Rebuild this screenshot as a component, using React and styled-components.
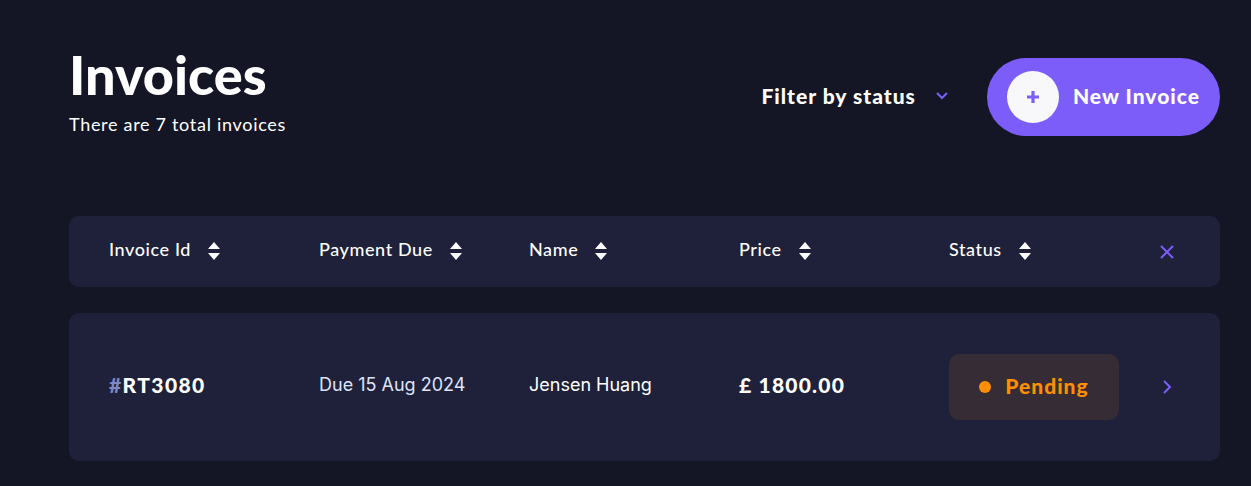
import styled, { createGlobalStyle } from 'styled-components';

const GlobalStyle = createGlobalStyle`
  body {
    margin: 0;
    background: #141625;
    font-family: "Lato", "Noto Sans", sans-serif;
    color: #ffffff;
  }
`;

const Page = styled.main`
  padding: 42px 31px 24px 69px;
`;

const TopBar = styled.header`
  display: flex;
  justify-content: space-between;
  align-items: center;
`;

const TitleBlock = styled.div`
  display: flex;
  flex-direction: column;
`;

const Title = styled.h1`
  margin: 0;
  font-size: 54px;
  line-height: 64px;
  font-weight: 900;
  letter-spacing: 0;
`;

const Subtitle = styled.p`
  margin: 6px 0 0;
  font-size: 18px;
  line-height: 22px;
  letter-spacing: 0.7px;
  color: #ffffff;
`;

const Actions = styled.div`
  display: flex;
  align-items: center;
  gap: 39px;
  margin-top: 16px;
`;

const Filter = styled.button`
  display: flex;
  align-items: center;
  gap: 20px;
  background: none;
  border: none;
  padding: 0 0 4px;
  color: #ffffff;
  font-family: inherit;
  font-size: 21px;
  font-weight: 900;
  letter-spacing: 1px;
  cursor: pointer;

  svg {
    margin-top: 2px;
  }
`;

const NewButton = styled.button`
  display: flex;
  align-items: center;
  gap: 14px;
  height: 78px;
  padding: 0 20px;
  border: none;
  border-radius: 39px;
  background: #7c5dfa;
  color: #ffffff;
  font-family: inherit;
  font-size: 21px;
  font-weight: 900;
  letter-spacing: 1px;
  cursor: pointer;
`;

const ButtonLabel = styled.span`
  padding-bottom: 3px;
`;

const PlusCircle = styled.span`
  display: flex;
  align-items: center;
  justify-content: center;
  width: 52px;
  height: 52px;
  border-radius: 50%;
  background: #f8f8fb;
`;

const Card = styled.div`
  display: grid;
  grid-template-columns: repeat(5, 210px) 1fr;
  align-items: center;
  padding: 0 46px 0 40px;
  height: ${(p) => p.$height}px;
  margin-top: ${(p) => p.$top}px;
  background: #1e2139;
  border-radius: 10px;
`;

const HeadCell = styled.div`
  display: flex;
  align-items: center;
  gap: 17px;
  padding-bottom: 5px;
  font-size: 18px;
  font-weight: 500;
  letter-spacing: 0.6px;
  color: #ffffff;

  svg {
    margin-top: 4px;
  }
`;

const EndCell = styled.div`
  display: flex;
  justify-content: flex-end;
  padding-right: ${(p) => p.$inset || 0}px;
`;

const TextCell = styled.div`
  padding-bottom: 5px;
`;

const IdCell = styled(TextCell)`
  font-size: 21px;
  font-weight: 900;
  letter-spacing: 1.4px;
  span {
    color: #7e88c3;
  }
`;

const DueCell = styled(TextCell)`
  font-family: "Inter", "Noto Sans", sans-serif;
  font-size: 18px;
  color: #dfe3fa;
`;

const NameCell = styled(TextCell)`
  font-family: "Inter", "Noto Sans", sans-serif;
  font-size: 18px;
  color: #ffffff;
`;

const PriceCell = styled(TextCell)`
  font-size: 21px;
  font-weight: 900;
  letter-spacing: 1.2px;
`;

const Badge = styled.div`
  display: flex;
  align-items: center;
  justify-content: center;
  gap: 14px;
  width: 170px;
  height: 66px;
  border-radius: 10px;
  background: #352c36;
  color: #ff8f00;
  font-size: 21px;
  font-weight: 900;
  letter-spacing: 1px;
`;

const BadgeLabel = styled.span`
  padding-bottom: 3px;
`;

const Dot = styled.span`
  width: 12px;
  height: 12px;
  border-radius: 50%;
  background: #ff8f00;
`;

const SortIcon = () => (
  <svg width="12" height="18" viewBox="0 0 12 18">
    <path d="M6 0 L12 7 H0 Z" fill="#ffffff" />
    <path d="M6 18 L12 11 H0 Z" fill="#ffffff" />
  </svg>
);

const columns = ['Invoice Id', 'Payment Due', 'Name', 'Price', 'Status'];

export default function App() {
  return (
    <>
      <GlobalStyle />
      <Page>
        <TopBar>
          <TitleBlock>
            <Title>Invoices</Title>
            <Subtitle>There are 7 total invoices</Subtitle>
          </TitleBlock>
          <Actions>
            <Filter>
              Filter by status
              <svg width="12" height="8" viewBox="0 0 12 8">
                <path d="M1 1l5 5 5-5" stroke="#7c5dfa" strokeWidth="2" fill="none" />
              </svg>
            </Filter>
            <NewButton>
              <PlusCircle>
                <svg width="12" height="12" viewBox="0 0 12 12">
                  <path d="M6 0v12M0 6h12" stroke="#7c5dfa" strokeWidth="3.2" />
                </svg>
              </PlusCircle>
              <ButtonLabel>New Invoice</ButtonLabel>
            </NewButton>
          </Actions>
        </TopBar>

        <Card $height={71} $top={80}>
          {columns.map((c) => (
            <HeadCell key={c}>
              {c}
              <SortIcon />
            </HeadCell>
          ))}
          <EndCell>
            <svg width="14" height="14" viewBox="0 0 14 14">
              <path d="M1 1l12 12M13 1L1 13" stroke="#7c5dfa" strokeWidth="2" />
            </svg>
          </EndCell>
        </Card>

        <Card $height={148} $top={26}>
          <IdCell>
            <span>#</span>RT3080
          </IdCell>
          <DueCell>Due 15 Aug 2024</DueCell>
          <NameCell>Jensen Huang</NameCell>
          <PriceCell>£ 1800.00</PriceCell>
          <Badge>
            <Dot />
            <BadgeLabel>Pending</BadgeLabel>
          </Badge>
          <EndCell $inset={3}>
            <svg width="8" height="14" viewBox="0 0 8 14">
              <path d="M1 1l6 6-6 6" stroke="#7c5dfa" strokeWidth="2" fill="none" />
            </svg>
          </EndCell>
        </Card>
      </Page>
    </>
  );
}
